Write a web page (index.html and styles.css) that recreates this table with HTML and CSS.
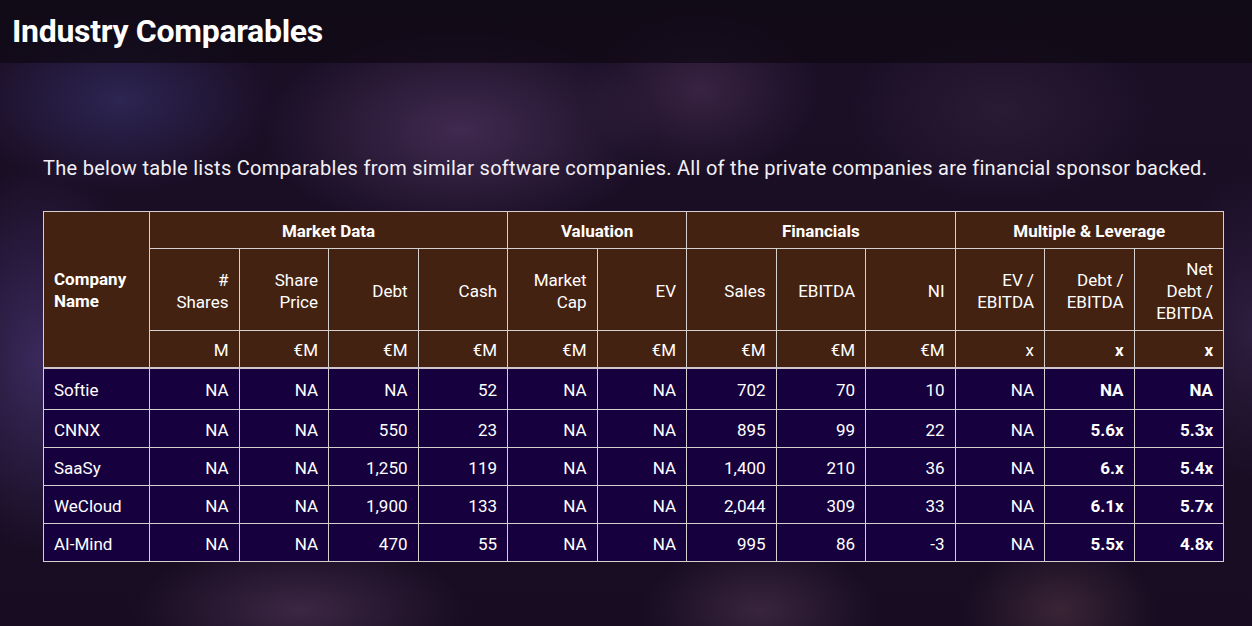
FILE: index.html
```html
<!DOCTYPE html>
<html>
<head>
<meta charset="utf-8">
<link rel="stylesheet" href="styles.css">
</head>
<body>
<div class="page">
  <header class="titlebar"><h1>Industry Comparables</h1></header>
  <main class="content">
    <p class="intro">The below table lists Comparables from similar software companies. All of the private companies are financial sponsor backed.</p>
    <table class="comps">
      <colgroup>
        <col class="c-name">
        <col><col><col><col><col><col><col><col><col><col><col><col>
      </colgroup>
      <thead>
        <tr class="h-group">
          <th rowspan="3" class="name-head">Company<br>Name</th>
          <th colspan="4" class="group">Market Data</th>
          <th colspan="2" class="group">Valuation</th>
          <th colspan="3" class="group">Financials</th>
          <th colspan="3" class="group">Multiple &amp; Leverage</th>
        </tr>
        <tr class="h-labels">
          <th>#<br>Shares</th>
          <th>Share<br>Price</th>
          <th>Debt</th>
          <th>Cash</th>
          <th>Market<br>Cap</th>
          <th>EV</th>
          <th>Sales</th>
          <th>EBITDA</th>
          <th>NI</th>
          <th>EV /<br>EBITDA</th>
          <th>Debt /<br>EBITDA</th>
          <th>Net<br>Debt /<br>EBITDA</th>
        </tr>
        <tr class="h-units">
          <th>M</th><th>€M</th><th>€M</th><th>€M</th><th>€M</th><th>€M</th><th>€M</th><th>€M</th><th>€M</th><th>x</th><th class="b">x</th><th class="b">x</th>
        </tr>
      </thead>
      <tbody>
        <tr class="first">
          <td>Softie</td><td>NA</td><td>NA</td><td>NA</td><td>52</td><td>NA</td><td>NA</td><td>702</td><td>70</td><td>10</td><td>NA</td><td class="b">NA</td><td class="b">NA</td>
        </tr>
        <tr>
          <td>CNNX</td><td>NA</td><td>NA</td><td>550</td><td>23</td><td>NA</td><td>NA</td><td>895</td><td>99</td><td>22</td><td>NA</td><td class="b">5.6x</td><td class="b">5.3x</td>
        </tr>
        <tr>
          <td>SaaSy</td><td>NA</td><td>NA</td><td>1,250</td><td>119</td><td>NA</td><td>NA</td><td>1,400</td><td>210</td><td>36</td><td>NA</td><td class="b">6.x</td><td class="b">5.4x</td>
        </tr>
        <tr>
          <td>WeCloud</td><td>NA</td><td>NA</td><td>1,900</td><td>133</td><td>NA</td><td>NA</td><td>2,044</td><td>309</td><td>33</td><td>NA</td><td class="b">6.1x</td><td class="b">5.7x</td>
        </tr>
        <tr>
          <td>AI-Mind</td><td>NA</td><td>NA</td><td>470</td><td>55</td><td>NA</td><td>NA</td><td>995</td><td>86</td><td>-3</td><td>NA</td><td class="b">5.5x</td><td class="b">4.8x</td>
        </tr>
      </tbody>
    </table>
  </main>
</div>
</body>
</html>
```

FILE: styles.css
```css
* { box-sizing: border-box; }
html, body { margin: 0; padding: 0; }
body {
  width: 1252px;
  height: 626px;
  overflow: hidden;
  font-family: Roboto, "Liberation Sans", sans-serif;
  color: #fff;
  background-color: #150b20;
  background-image:
    radial-gradient(ellipse 160px 280px at 40px 360px, rgba(80, 60, 130, 0.6), transparent 70%),
    radial-gradient(ellipse 220px 130px at 120px 100px, rgba(60, 55, 120, 0.55), transparent 70%),
    radial-gradient(ellipse 280px 150px at 460px 130px, rgba(95, 65, 115, 0.55), transparent 70%),
    radial-gradient(ellipse 170px 120px at 700px 90px, rgba(85, 55, 95, 0.5), transparent 70%),
    radial-gradient(ellipse 220px 130px at 1000px 110px, rgba(65, 45, 75, 0.4), transparent 70%),
    radial-gradient(ellipse 240px 100px at 300px 610px, rgba(90, 60, 95, 0.55), transparent 70%),
    radial-gradient(ellipse 170px 100px at 760px 610px, rgba(90, 60, 90, 0.5), transparent 70%),
    radial-gradient(ellipse 140px 100px at 1060px 610px, rgba(100, 65, 80, 0.45), transparent 70%),
    radial-gradient(ellipse 120px 220px at 1250px 330px, rgba(65, 45, 90, 0.5), transparent 70%),
    linear-gradient(180deg, #1b0f26 0%, #1a0e25 40%, #170c21 100%);
}
.page { display: flex; flex-direction: column; }
.titlebar {
  height: 63px;
  background: rgba(14, 8, 18, 0.72);
  display: flex;
  align-items: center;
  padding-left: 12px;
}
.titlebar h1 {
  margin: 0;
  font-size: 32px;
  font-weight: 700;
  letter-spacing: -0.3px;
  color: #fff;
  padding-bottom: 1px;
}
.content { padding: 0 0 0 43px; }
.intro {
  margin: 93px 0 0;
  font-size: 20px;
  line-height: 24px;
  letter-spacing: 0.28px;
  color: #f2f0f4;
}
.comps {
  margin-top: 31px;
  border-collapse: collapse;
  table-layout: fixed;
  width: 1180px;
  font-size: 17px;
  border: 1px solid #d6cfd0;
}
.comps col { width: 89.5px; }
.comps col.c-name { width: 106px; }
.comps th, .comps td {
  border: 1px solid #d6cfd0;
  padding: 2px 10px 0;
  text-align: right;
  line-height: 22px;
}
.comps thead th {
  background: #442211;
  font-weight: 400;
}
.comps thead th.group { text-align: center; font-weight: 700; }
.comps thead th.name-head { text-align: left; font-weight: 700; }
.comps thead th.b { font-weight: 700; }
.h-group { height: 37px; }
.h-labels { height: 82px; }
.h-units { height: 37px; }
.comps tbody td {
  background: #16013e;
  height: 38px;
}
.comps tbody td:first-child { text-align: left; }
.comps tbody tr.first td { height: 42px; border-top: 2px solid #cfc7cc; }
.comps td.b { font-weight: 700; }
```
